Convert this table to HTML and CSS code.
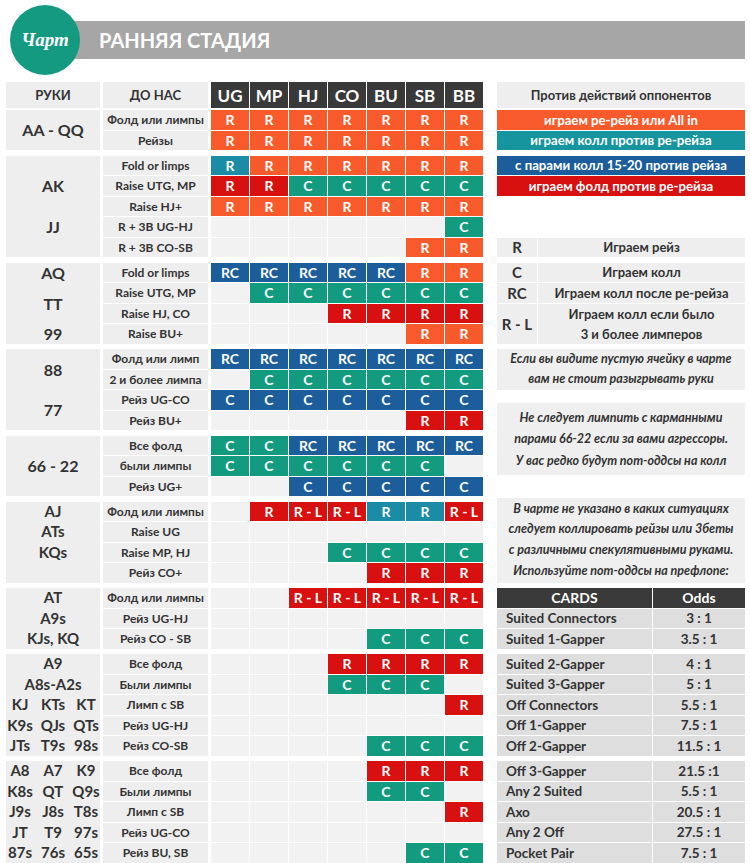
FILE: index.html
```html
<!DOCTYPE html>
<html lang="ru">
<head>
<meta charset="utf-8">
<title>Чарт — ранняя стадия</title>
<link rel="stylesheet" href="styles.css">
</head>
<body>
<header class="top">
  <div class="titlebar">РАННЯЯ СТАДИЯ</div>
  <div class="badge">Чарт</div>
</header>
<main class="main">
  <section class="chart">
    <div class="g hdr">
      <div class="hh">РУКИ</div>
      <div class="hh">ДО НАС</div>
      <div class="p">UG</div><div class="p">MP</div><div class="p">HJ</div><div class="p">CO</div><div class="p">BU</div><div class="p">SB</div><div class="p">BB</div>
    </div>

    <div class="g n2">
      <div class="hands"><span>AA - QQ</span></div>
      <div class="act">Фолд или лимпы</div>
      <span class="c o">R</span><span class="c o">R</span><span class="c o">R</span><span class="c o">R</span><span class="c o">R</span><span class="c o">R</span><span class="c o">R</span>
      <div class="act">Рейзы</div>
      <span class="c o">R</span><span class="c o">R</span><span class="c o">R</span><span class="c o">R</span><span class="c o">R</span><span class="c o">R</span><span class="c o">R</span>
    </div>

    <div class="g n5">
      <div class="hands h-ak"><span>AK</span><span>JJ</span></div>
      <div class="act">Fold or limps</div>
      <span class="c q">R</span><span class="c o">R</span><span class="c o">R</span><span class="c o">R</span><span class="c o">R</span><span class="c o">R</span><span class="c o">R</span>
      <div class="act">Raise UTG, MP</div>
      <span class="c x">R</span><span class="c x">R</span><span class="c t">C</span><span class="c t">C</span><span class="c t">C</span><span class="c t">C</span><span class="c t">C</span>
      <div class="act">Raise HJ+</div>
      <span class="c o">R</span><span class="c o">R</span><span class="c o">R</span><span class="c o">R</span><span class="c o">R</span><span class="c o">R</span><span class="c o">R</span>
      <div class="act">R + 3B UG-HJ</div>
      <span class="c"></span><span class="c"></span><span class="c"></span><span class="c"></span><span class="c"></span><span class="c"></span><span class="c t">C</span>
      <div class="act">R + 3B CO-SB</div>
      <span class="c"></span><span class="c"></span><span class="c"></span><span class="c"></span><span class="c"></span><span class="c o">R</span><span class="c o">R</span>
    </div>

    <div class="g n4">
      <div class="hands h-between"><span>AQ</span><span>TT</span><span>99</span></div>
      <div class="act">Fold or limps</div>
      <span class="c b">RC</span><span class="c b">RC</span><span class="c b">RC</span><span class="c b">RC</span><span class="c b">RC</span><span class="c o">R</span><span class="c o">R</span>
      <div class="act">Raise UTG, MP</div>
      <span class="c"></span><span class="c t">C</span><span class="c t">C</span><span class="c t">C</span><span class="c t">C</span><span class="c t">C</span><span class="c t">C</span>
      <div class="act">Raise HJ, CO</div>
      <span class="c"></span><span class="c"></span><span class="c"></span><span class="c x">R</span><span class="c x">R</span><span class="c x">R</span><span class="c x">R</span>
      <div class="act">Raise BU+</div>
      <span class="c"></span><span class="c"></span><span class="c"></span><span class="c"></span><span class="c"></span><span class="c o">R</span><span class="c o">R</span>
    </div>

    <div class="g n4">
      <div class="hands h-halves"><span>88</span><span>77</span></div>
      <div class="act">Фолд или лимп</div>
      <span class="c b">RC</span><span class="c b">RC</span><span class="c b">RC</span><span class="c b">RC</span><span class="c b">RC</span><span class="c b">RC</span><span class="c b">RC</span>
      <div class="act">2 и более лимпа</div>
      <span class="c"></span><span class="c t">C</span><span class="c t">C</span><span class="c t">C</span><span class="c t">C</span><span class="c t">C</span><span class="c t">C</span>
      <div class="act">Рейз UG-CO</div>
      <span class="c b">C</span><span class="c b">C</span><span class="c b">C</span><span class="c b">C</span><span class="c b">C</span><span class="c b">C</span><span class="c b">C</span>
      <div class="act">Рейз BU+</div>
      <span class="c"></span><span class="c"></span><span class="c"></span><span class="c"></span><span class="c"></span><span class="c x">R</span><span class="c x">R</span>
    </div>

    <div class="g n3">
      <div class="hands"><span>66 - 22</span></div>
      <div class="act">Все фолд</div>
      <span class="c t">C</span><span class="c t">C</span><span class="c b">RC</span><span class="c b">RC</span><span class="c b">RC</span><span class="c b">RC</span><span class="c b">RC</span>
      <div class="act">были лимпы</div>
      <span class="c t">C</span><span class="c t">C</span><span class="c t">C</span><span class="c t">C</span><span class="c t">C</span><span class="c t">C</span><span class="c"></span>
      <div class="act">Рейз UG+</div>
      <span class="c"></span><span class="c"></span><span class="c b">C</span><span class="c b">C</span><span class="c b">C</span><span class="c b">C</span><span class="c b">C</span>
    </div>

    <div class="g n4">
      <div class="hands h-rows"><span>AJ</span><span>ATs</span><span>KQs</span></div>
      <div class="act">Фолд или лимпы</div>
      <span class="c"></span><span class="c x">R</span><span class="c x">R - L</span><span class="c x">R - L</span><span class="c q">R</span><span class="c q">R</span><span class="c x">R - L</span>
      <div class="act">Raise UG</div>
      <span class="c"></span><span class="c"></span><span class="c"></span><span class="c"></span><span class="c"></span><span class="c"></span><span class="c"></span>
      <div class="act">Raise MP, HJ</div>
      <span class="c"></span><span class="c"></span><span class="c"></span><span class="c t">C</span><span class="c t">C</span><span class="c t">C</span><span class="c t">C</span>
      <div class="act">Рейз CO+</div>
      <span class="c"></span><span class="c"></span><span class="c"></span><span class="c"></span><span class="c x">R</span><span class="c x">R</span><span class="c x">R</span>
    </div>

    <div class="g n3">
      <div class="hands h-rows"><span>AT</span><span>A9s</span><span>KJs, KQ</span></div>
      <div class="act">Фолд или лимпы</div>
      <span class="c"></span><span class="c"></span><span class="c x">R - L</span><span class="c x">R - L</span><span class="c x">R - L</span><span class="c x">R - L</span><span class="c x">R - L</span>
      <div class="act">Рейз UG-HJ</div>
      <span class="c"></span><span class="c"></span><span class="c"></span><span class="c"></span><span class="c"></span><span class="c"></span><span class="c"></span>
      <div class="act">Рейз CO - SB</div>
      <span class="c"></span><span class="c"></span><span class="c"></span><span class="c"></span><span class="c t">C</span><span class="c t">C</span><span class="c t">C</span>
    </div>

    <div class="g n5">
      <div class="hands h-rows">
        <span>A9</span><span>A8s-A2s</span>
        <span class="tri"><b>KJ</b><b>KTs</b><b>KT</b></span>
        <span class="tri"><b>K9s</b><b>QJs</b><b>QTs</b></span>
        <span class="tri"><b>JTs</b><b>T9s</b><b>98s</b></span>
      </div>
      <div class="act">Все фолд</div>
      <span class="c"></span><span class="c"></span><span class="c"></span><span class="c x">R</span><span class="c x">R</span><span class="c x">R</span><span class="c x">R</span>
      <div class="act">Были лимпы</div>
      <span class="c"></span><span class="c"></span><span class="c"></span><span class="c t">C</span><span class="c t">C</span><span class="c t">C</span><span class="c"></span>
      <div class="act">Лимп с SB</div>
      <span class="c"></span><span class="c"></span><span class="c"></span><span class="c"></span><span class="c"></span><span class="c"></span><span class="c x">R</span>
      <div class="act">Рейз UG-HJ</div>
      <span class="c"></span><span class="c"></span><span class="c"></span><span class="c"></span><span class="c"></span><span class="c"></span><span class="c"></span>
      <div class="act">Рейз CO-SB</div>
      <span class="c"></span><span class="c"></span><span class="c"></span><span class="c"></span><span class="c t">C</span><span class="c t">C</span><span class="c t">C</span>
    </div>

    <div class="g n5">
      <div class="hands h-rows">
        <span class="tri"><b>A8</b><b>A7</b><b>K9</b></span>
        <span class="tri"><b>K8s</b><b>QT</b><b>Q9s</b></span>
        <span class="tri"><b>J9s</b><b>J8s</b><b>T8s</b></span>
        <span class="tri"><b>JT</b><b>T9</b><b>97s</b></span>
        <span class="tri"><b>87s</b><b>76s</b><b>65s</b></span>
      </div>
      <div class="act">Все фолд</div>
      <span class="c"></span><span class="c"></span><span class="c"></span><span class="c"></span><span class="c x">R</span><span class="c x">R</span><span class="c x">R</span>
      <div class="act">Были лимпы</div>
      <span class="c"></span><span class="c"></span><span class="c"></span><span class="c"></span><span class="c t">C</span><span class="c t">C</span><span class="c"></span>
      <div class="act">Лимп с SB</div>
      <span class="c"></span><span class="c"></span><span class="c"></span><span class="c"></span><span class="c"></span><span class="c"></span><span class="c x">R</span>
      <div class="act">Рейз UG-CO</div>
      <span class="c"></span><span class="c"></span><span class="c"></span><span class="c"></span><span class="c"></span><span class="c"></span><span class="c"></span>
      <div class="act">Рейз BU, SB</div>
      <span class="c"></span><span class="c"></span><span class="c"></span><span class="c"></span><span class="c"></span><span class="c t">C</span><span class="c t">C</span>
    </div>
  </section>

  <aside class="side">
    <div class="opp">Против действий оппонентов</div>
    <div class="legend">
      <div class="bar o">играем ре-рейз или All in</div>
      <div class="bar q">играем колл против ре-рейза</div>
    </div>
    <div class="legend legend-last">
      <div class="bar b">с парами колл 15-20 против рейза</div>
      <div class="bar x">играем фолд против ре-рейза</div>
    </div>
    <div class="keys">
      <div class="kk">R</div><div class="kt">Играем рейз</div>
    </div>
    <div class="keys">
      <div class="kk">C</div><div class="kt">Играем колл</div>
      <div class="kk">RC</div><div class="kt">Играем колл после ре-рейза</div>
      <div class="kk two">R - L</div><div class="kt two"><span>Играем колл если было</span><span>3 и более лимперов</span></div>
    </div>
    <div class="note note1"><span>Если вы видите пустую ячейку в чарте</span><span>вам не стоит разыгрывать руки</span></div>
    <div class="note note2"><span>Не следует лимпить с карманными</span><span>парами 66-22 если за вами агрессоры.</span><span>У вас редко будут пот-оддсы на колл</span></div>
    <div class="note note3"><span>В чарте не указано в каких ситуациях</span><span>следует коллировать рейзы или 3беты</span><span>с различными спекулятивными руками.</span><span>Используйте пот-оддсы на префлопе:</span></div>
    <div class="odds">
      <div class="oh">CARDS</div><div class="oh">Odds</div>
      <div class="oc">Suited Connectors</div><div class="ov">3 : 1</div>
      <div class="oc">Suited 1-Gapper</div><div class="ov">3.5 : 1</div>
    </div>
    <div class="odds">
      <div class="oc">Suited 2-Gapper</div><div class="ov">4 : 1</div>
      <div class="oc">Suited 3-Gapper</div><div class="ov">5 : 1</div>
      <div class="oc">Off Connectors</div><div class="ov">5.5 : 1</div>
      <div class="oc">Off 1-Gapper</div><div class="ov">7.5 : 1</div>
      <div class="oc">Off 2-Gapper</div><div class="ov">11.5 : 1</div>
    </div>
    <div class="odds">
      <div class="oc">Off 3-Gapper</div><div class="ov">21.5 :1</div>
      <div class="oc">Any 2 Suited</div><div class="ov">5.5 : 1</div>
      <div class="oc">Axo</div><div class="ov">20.5 : 1</div>
      <div class="oc">Any 2 Off</div><div class="ov">27.5 : 1</div>
      <div class="oc">Pocket Pair</div><div class="ov">7.5 : 1</div>
    </div>
  </aside>
</main>
</body>
</html>
```

FILE: styles.css
```css
* { box-sizing: border-box; margin: 0; padding: 0; }

body {
  margin: 0;
  width: 750px;
  height: 863px;
  overflow: hidden;
  background: #fff;
  color: #333;
  font-family: Lato, "Open Sans", "DejaVu Sans", sans-serif;
}

/* ---------- top header ---------- */
.top {
  position: relative;
  height: 82px;
  padding-top: 21px;
}
.titlebar {
  margin-left: 40px;
  width: 705px;
  height: 38px;
  background: #a6a6a6;
  color: #fff;
  font-weight: 700;
  font-size: 20px;
  line-height: 39px;
  padding-left: 59px;
}
.badge {
  position: absolute;
  left: 10px;
  top: 5px;
  width: 70px;
  height: 70px;
  border-radius: 50%;
  background: #139a80;
  color: #fff;
  font-family: "Liberation Serif", serif;
  font-style: italic;
  font-weight: 700;
  font-size: 19px;
  display: flex;
  align-items: center;
  justify-content: center;
}

/* ---------- layout ---------- */
.main {
  display: flex;
  gap: 14px;
  padding-left: 6px;
}
.chart { width: 477px; }
.side { width: 248px; }

/* ---------- chart grid ---------- */
.g {
  display: grid;
  grid-template-columns: 96px 107px repeat(7, 38px);
  column-gap: 1px;
  row-gap: 1px;
  margin-bottom: 5.5px;
}
.hdr { grid-template-rows: 26px; margin-bottom: 2px; }
.n2 { grid-template-rows: repeat(2, 19.5px); }
.n3 { grid-template-rows: repeat(3, 19.5px); }
.n4 { grid-template-rows: repeat(4, 19.5px); }
.n5 { grid-template-rows: repeat(5, 19.5px); }

.hh {
  background: #eeeeee;
  margin-right: 2px;
  font-weight: 700;
  font-size: 13px;
  display: flex;
  align-items: center;
  justify-content: center;
}
.p {
  background: #393939;
  color: #fff;
  font-weight: 700;
  font-size: 17px;
  display: flex;
  align-items: center;
  justify-content: center;
}

.hands {
  grid-column: 1;
  grid-row: 1 / -1;
  margin-right: 2px;
  background: #eeeeee;
  font-weight: 700;
  font-size: 16px;
  color: #333;
  display: flex;
  flex-direction: column;
  align-items: center;
  justify-content: center;
  line-height: 19.5px;
}
.h-ak {
  display: grid;
  grid-template-rows: 60.5px 19.5px 1fr;
  row-gap: 1px;
  justify-items: center;
  align-items: center;
}
.h-between {
  justify-content: space-between;
  padding-top: 0.5px;
}
.h-halves > span {
  flex: 1;
  display: flex;
  align-items: center;
}
.h-rows {
  display: grid;
  grid-auto-rows: 19.5px;
  row-gap: 1px;
  align-content: start;
  justify-items: center;
  align-items: center;
  font-size: 15px;
}
.tri {
  display: grid;
  grid-template-columns: repeat(3, 33px);
  justify-content: center;
  justify-items: center;
}
.tri b { font-weight: 700; }

.act {
  background: #eeeeee;
  margin-right: 2px;
  font-weight: 700;
  font-size: 12px;
  color: #333;
  white-space: nowrap;
  display: flex;
  align-items: center;
  justify-content: center;
}

.c {
  background: #f2f2f2;
  color: #fff;
  font-weight: 700;
  font-size: 14px;
  white-space: nowrap;
  display: flex;
  align-items: center;
  justify-content: center;
}
.o { background: #f85a2b; }
.t { background: #139b80; }
.b { background: #1b5e9b; }
.x { background: #d8100f; }
.q { background: #1a8ca6; }

/* ---------- side panel ---------- */
.opp {
  height: 26px;
  margin-bottom: 2px;
  background: #eeeeee;
  font-weight: 700;
  font-size: 13px;
  display: flex;
  align-items: center;
  justify-content: center;
}
.legend {
  display: flex;
  flex-direction: column;
  gap: 1px;
  margin-bottom: 5.5px;
}
.legend-last { margin-bottom: 42px; }
.bar {
  height: 19.5px;
  color: #fff;
  font-weight: 700;
  font-size: 13.2px;
  display: flex;
  align-items: center;
  justify-content: center;
}
.legend .q { background: #17959f; }

.keys {
  display: grid;
  grid-template-columns: 40px 1fr;
  grid-auto-rows: 19.5px;
  column-gap: 1px;
  row-gap: 1px;
  margin-bottom: 5.5px;
}
.kk, .kt {
  background: #eeeeee;
  font-weight: 700;
  display: flex;
  align-items: center;
  justify-content: center;
}
.kk { font-size: 15px; }
.kt { font-size: 13px; }
.two { grid-row: span 2; }
.kt.two {
  flex-direction: column;
  line-height: 20px;
}

.note {
  background: #efefef;
  font-style: italic;
  font-weight: 700;
  font-size: 12.5px;
  text-align: center;
  display: flex;
  flex-direction: column;
  justify-content: center;
  align-items: center;
  white-space: nowrap;
}
.note1 { height: 40.5px; line-height: 20px; }
.note2 { height: 72px; margin-top: 13.5px; line-height: 21.5px; }
.note3 { height: 84.5px; margin-top: 23px; margin-bottom: 5.5px; line-height: 20.8px; }

.odds {
  display: grid;
  grid-template-columns: 155px 92px;
  grid-auto-rows: 19.5px;
  column-gap: 1px;
  row-gap: 1px;
  margin-bottom: 5.5px;
}
.oh {
  background: #3a3a3a;
  color: #fff;
  font-weight: 700;
  font-size: 14px;
  display: flex;
  align-items: center;
  justify-content: center;
}
.oc, .ov {
  background: #dedede;
  font-weight: 700;
  font-size: 13.5px;
  display: flex;
  align-items: center;
}
.oc { padding-left: 9px; }
.ov { justify-content: center; }
```
